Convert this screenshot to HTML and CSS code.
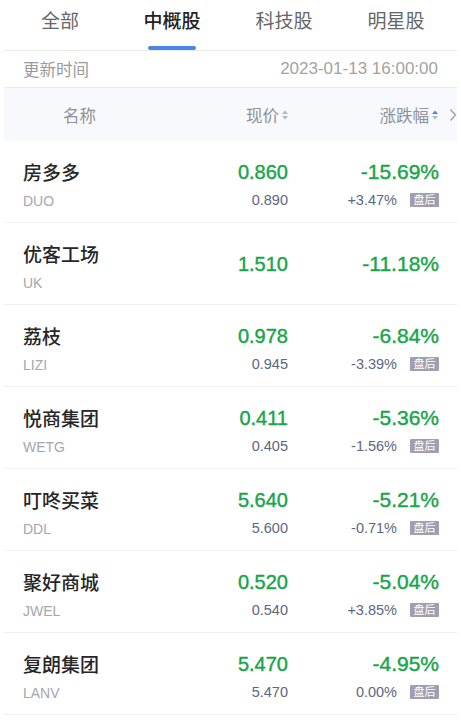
FILE: index.html
```html
<!DOCTYPE html>
<html lang="zh-CN">
<head>
  <meta charset="UTF-8" />
  <title>中概股</title>
  <link rel="stylesheet" href="styles.css">
</head>
<body>
  <div class="tabs">
    <div class="tab">全部</div>
    <div class="tab active">中概股<span class="bar"></span></div>
    <div class="tab">科技股</div>
    <div class="tab">明星股</div>
  </div>

  <div class="update">
    <span>更新时间</span>
    <span class="date">2023-01-13 16:00:00</span>
  </div>

  <div class="head">
    <div class="head-name">名称</div>
    <div class="head-cell">现价
      <svg class="sort" width="6" height="10" viewBox="0 0 6 10"><path d="M3 0.5L6 4H0z" fill="#b4b8c0"/><path d="M3 9.5L6 6H0z" fill="#b4b8c0"/></svg>
    </div>
    <div class="head-cell">涨跌幅
      <svg class="sort" width="6" height="10" viewBox="0 0 6 10"><path d="M3 0.5L6 4H0z" fill="#4a86e8"/><path d="M3 9.5L6 6H0z" fill="#b4b8c0"/></svg>
    </div>
    <div class="head-more">
      <svg width="8" height="14" viewBox="0 0 8 14"><path d="M1.5 1.5L6.5 7L1.5 12.5" fill="none" stroke="#9a9ea6" stroke-width="1.3"/></svg>
    </div>
  </div>

  <div class="list">
    <div class="row">
      <div class="name"><div class="cn">房多多</div><div class="code">DUO</div></div>
      <div class="quote"><div class="big">0.860</div><div class="sub">0.890</div></div>
      <div class="quote"><div class="big pct">-15.69%</div><div class="sub">+3.47%<span class="badge">盘后</span></div></div>
    </div>
    <div class="row">
      <div class="name"><div class="cn">优客工场</div><div class="code">UK</div></div>
      <div class="quote"><div class="big">1.510</div></div>
      <div class="quote"><div class="big pct">-11.18%</div></div>
    </div>
    <div class="row">
      <div class="name"><div class="cn">荔枝</div><div class="code">LIZI</div></div>
      <div class="quote"><div class="big">0.978</div><div class="sub">0.945</div></div>
      <div class="quote"><div class="big pct">-6.84%</div><div class="sub">-3.39%<span class="badge">盘后</span></div></div>
    </div>
    <div class="row">
      <div class="name"><div class="cn">悦商集团</div><div class="code">WETG</div></div>
      <div class="quote"><div class="big">0.411</div><div class="sub">0.405</div></div>
      <div class="quote"><div class="big pct">-5.36%</div><div class="sub">-1.56%<span class="badge">盘后</span></div></div>
    </div>
    <div class="row">
      <div class="name"><div class="cn">叮咚买菜</div><div class="code">DDL</div></div>
      <div class="quote"><div class="big">5.640</div><div class="sub">5.600</div></div>
      <div class="quote"><div class="big pct">-5.21%</div><div class="sub">-0.71%<span class="badge">盘后</span></div></div>
    </div>
    <div class="row">
      <div class="name"><div class="cn">聚好商城</div><div class="code">JWEL</div></div>
      <div class="quote"><div class="big">0.520</div><div class="sub">0.540</div></div>
      <div class="quote"><div class="big pct">-5.04%</div><div class="sub">+3.85%<span class="badge">盘后</span></div></div>
    </div>
    <div class="row">
      <div class="name"><div class="cn">复朗集团</div><div class="code">LANV</div></div>
      <div class="quote"><div class="big">5.470</div><div class="sub">5.470</div></div>
      <div class="quote"><div class="big pct">-4.95%</div><div class="sub">0.00%<span class="badge">盘后</span></div></div>
    </div>
  </div>
</body>
</html>
```

FILE: styles.css
```css
body {
  margin: 0;
  background: #fff;
  font-family: 'Liberation Sans', 'Noto Sans CJK SC', sans-serif;
  color: #333;
}

.tabs {
  margin: 0 4px;
  height: 51px;
  box-sizing: border-box;
  border-bottom: 1px solid #ececec;
  display: grid;
  grid-template-columns: repeat(4, 112px);
}

.tab {
  display: flex;
  flex-direction: column;
  align-items: center;
  padding-top: 10px;
  font-size: 19px;
  line-height: 24px;
  color: #666;
}

.tab.active {
  color: #222;
  font-weight: 500;
}

.bar {
  margin-top: 12px;
  width: 48px;
  height: 4px;
  border-radius: 2px;
  background: #4a86e8;
}

.update {
  margin: 0 4px;
  height: 36px;
  padding: 0 19px;
  border-bottom: 1px solid #ececec;
  display: flex;
  justify-content: space-between;
  align-items: center;
  font-size: 16.5px;
  color: #9a9a9a;
}

.date {
  font-size: 17px;
  color: #a3a3a3;
}

.head {
  margin: 0 4px;
  height: 53px;
  padding-left: 19px;
  background: #f8f9fc;
  display: grid;
  grid-template-columns: 1fr 130px 150px 19px;
  align-items: center;
  font-size: 16.5px;
  color: #8e9199;
}

.head-name {
  padding-left: 40px;
}

.head-cell {
  display: flex;
  justify-content: flex-end;
  align-items: center;
  gap: 2px;
}

.sort {
  margin-left: 1px;
}

.head-more {
  display: flex;
  align-items: center;
  padding-left: 11px;
}

.list {
  margin: 0 4px;
}

.row {
  height: 82px;
  box-sizing: border-box;
  padding: 0 19px;
  border-bottom: 1px solid #f0f0f0;
  display: grid;
  grid-template-columns: 1fr 130px 150px;
}

.name {
  padding-top: 21px;
}

.cn {
  font-size: 19px;
  line-height: 24px;
  font-weight: 500;
  color: #262626;
}

.code {
  margin-top: 5px;
  font-size: 14px;
  line-height: 20px;
  color: #a4a7ad;
}

.quote {
  display: flex;
  flex-direction: column;
  justify-content: center;
  align-items: flex-end;
}

.big {
  font-size: 20px;
  line-height: 24px;
  color: #17a54a;
  -webkit-text-stroke: 0.4px #17a54a;
}

.big.pct {
  font-size: 21px;
  margin-right: -1px;
}

.sub {
  margin-top: 6px;
  margin-bottom: -6px;
  font-size: 14.5px;
  line-height: 20px;
  color: #5c6880;
  display: flex;
  align-items: center;
}

.badge {
  margin-left: 13px;
  margin-right: -1px;
  width: 29px;
  height: 14px;
  line-height: 14px;
  text-align: center;
  font-size: 11px;
  color: #fff;
  background: #a09fb2;
  border-radius: 1px;
}
```
